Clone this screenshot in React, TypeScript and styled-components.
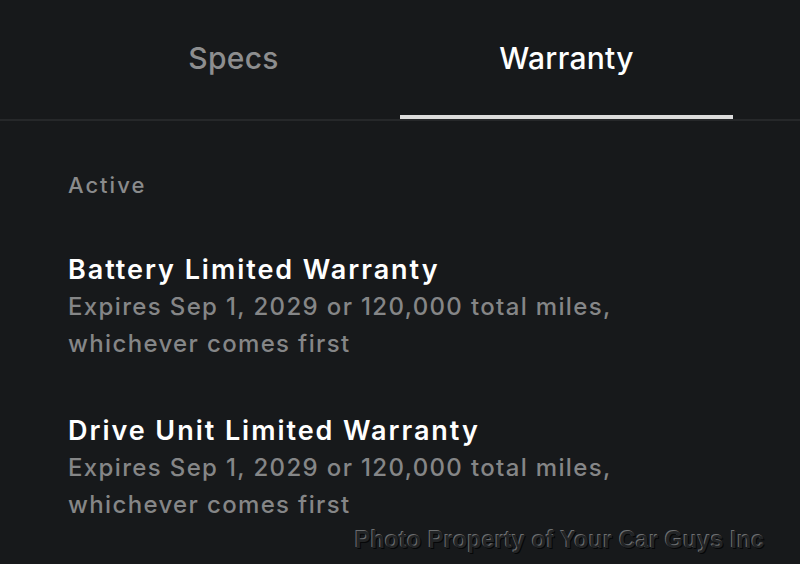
import React from "react";
import styled, { createGlobalStyle } from "styled-components";

const Global = createGlobalStyle`
  html, body { margin: 0; padding: 0; background: #17191b; }
  body { font-family: Inter, "Noto Sans", sans-serif; -webkit-font-smoothing: antialiased; }
`;

const Page = styled.div`
  position: relative;
  width: 800px;
  height: 564px;
  overflow: hidden;
  background: #17191b;
`;

const TabBar = styled.div`
  display: flex;
  padding: 0 67px;
  border-bottom: 2px solid #26282a;
`;

const Tab = styled.div<{ $active?: boolean }>`
  flex: 1;
  height: 119px;
  display: flex;
  align-items: center;
  justify-content: center;
  padding-bottom: 4px;
  box-sizing: border-box;
  position: relative;
  font-size: 30px;
  font-weight: 500;
  letter-spacing: 0.3px;
  color: ${(p) => (p.$active ? "#ffffff" : "#8d8e8f")};
  &::after {
    content: "";
    display: ${(p) => (p.$active ? "block" : "none")};
    position: absolute;
    left: 0;
    right: 0;
    bottom: 0;
    height: 4px;
    background: #dcdcdc;
  }
`;

const Content = styled.div`
  padding: 50px 68px 0;
  display: flex;
  flex-direction: column;
`;

const Section = styled.div`
  font-size: 22px;
  font-weight: 500;
  letter-spacing: 2px;
  color: #8a8b8c;
  line-height: 28px;
  margin-bottom: 53px;
`;

const Item = styled.div`
  display: flex;
  flex-direction: column;
  margin-bottom: 51px;
`;

const Title = styled.div`
  font-size: 27px;
  font-weight: 600;
  letter-spacing: 1.95px;
  color: #ffffff;
  line-height: 36px;
`;

const Desc = styled.div`
  font-size: 24px;
  font-weight: 500;
  letter-spacing: 1.35px;
  color: #858687;
  line-height: 37px;
`;

const Watermark = styled.div`
  position: absolute;
  left: 355px;
  top: 527px;
  font-family: "Liberation Sans", Arial, sans-serif;
  font-size: 23px;
  font-weight: 700;
  letter-spacing: 0.3px;
  color: #222426;
  text-shadow: -1px -1px 0 #6c6e70, 1px 1px 0 #060708;
  white-space: nowrap;
`;

const items = ["Battery Limited Warranty", "Drive Unit Limited Warranty"];

export default function App() {
  return (
    <Page>
      <Global />
      <TabBar>
        <Tab>Specs</Tab>
        <Tab $active>Warranty</Tab>
      </TabBar>
      <Content>
        <Section>Active</Section>
        {items.map((t) => (
          <Item key={t}>
            <Title>{t}</Title>
            <Desc>
              Expires Sep 1, 2029 or 120,000 total miles,
              <br />
              whichever comes first
            </Desc>
          </Item>
        ))}
      </Content>
      <Watermark>Photo Property of Your Car Guys Inc</Watermark>
    </Page>
  );
}
